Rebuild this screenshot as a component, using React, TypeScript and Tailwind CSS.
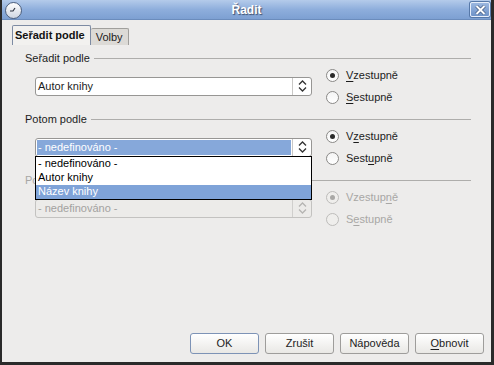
import * as React from 'react';

// Radio button with optional underlined accelerator letter
function Radio({
  label,
  ul,
  checked = false,
  disabled = false,
}: {
  label: string;
  ul: number;
  checked?: boolean;
  disabled?: boolean;
}) {
  const before = label.slice(0, ul);
  const mid = label.slice(ul, ul + 1);
  const after = label.slice(ul + 1);
  return (
    <div className="flex items-center h-[14px]">
      <div
        className={`w-[13px] h-[13px] rounded-full border flex items-center justify-center ${
          disabled
            ? 'border-[#bdbcba] bg-[#efeeec]'
            : 'border-[#8a8987] bg-gradient-to-b from-[#f4f4f4] to-white'
        }`}
      >
        {checked && (
          <div className={`w-[5px] h-[5px] rounded-full ${disabled ? 'bg-[#a9a8a6]' : 'bg-[#2a2a2a]'}`} />
        )}
      </div>
      <span className={`ml-[7px] leading-[14px] ${disabled ? 'text-[#a8a7a5]' : 'text-[#1c1c1c]'}`}>
        {before}
        <span className="underline underline-offset-[2px]">{mid}</span>
        {after}
      </span>
    </div>
  );
}

function SpinArrows({ disabled = false }: { disabled?: boolean }) {
  const c = disabled ? '#b5b4b2' : '#333333';
  return (
    <svg width="9" height="14" viewBox="0 0 9 14">
      <path d="M1 5.5 L4.5 2 L8 5.5" fill="none" stroke={c} strokeWidth="1.3" />
      <path d="M1 8.5 L4.5 12 L8 8.5" fill="none" stroke={c} strokeWidth="1.3" />
    </svg>
  );
}

function Combo({
  value,
  selected = false,
  disabled = false,
  children,
}: {
  value: string;
  selected?: boolean;
  disabled?: boolean;
  children?: React.ReactNode;
}) {
  return (
    <div
      className={`relative ml-[10px] w-[277px] h-[19px] rounded-[3px] border flex ${
        disabled ? 'border-[#c3c2c0] bg-[#ecebe9]' : 'border-[#979694] bg-white'
      }`}
    >
      <div className="flex-1 flex items-center p-[1px]">
        <div
          className={`h-full w-full flex items-center pl-[1px] leading-none ${
            selected ? 'bg-[#86a8da] text-white' : disabled ? 'text-[#a3a2a0]' : 'text-[#1c1c1c]'
          }`}
        >
          {value}
        </div>
      </div>
      <div
        className={`w-[19px] flex items-center justify-center border-l ${
          disabled ? 'border-[#d0cfcd]' : 'border-[#c9c8c6]'
        }`}
      >
        <SpinArrows disabled={disabled} />
      </div>
      {children}
    </div>
  );
}

function SectionLabel({ text, disabled = false }: { text: string; disabled?: boolean }) {
  return (
    <div className="flex items-center h-[14px]">
      <span className={`leading-[14px] ${disabled ? 'text-[#a8a7a5]' : 'text-[#1c1c1c]'}`}>{text}</span>
      <div className="flex-1 ml-[4px] border-t border-[#aeadab] border-b-white h-0" />
    </div>
  );
}

function Section({
  label,
  value,
  up,
  down,
  selected,
  disabled,
  dropdown,
}: {
  label: string;
  value: string;
  up: number;
  down: number;
  selected?: boolean;
  disabled?: boolean;
  dropdown?: React.ReactNode;
}) {
  return (
    <div className="flex flex-col">
      <SectionLabel text={label} disabled={disabled} />
      <div className="flex items-center mt-[3px] h-[36px]">
        <Combo value={value} selected={selected} disabled={disabled}>
          {dropdown}
        </Combo>
        <div className="flex flex-col gap-[8px] ml-[14px]">
          <Radio label="Vzestupně" ul={up} checked disabled={disabled} />
          <Radio label="Sestupně" ul={down} disabled={disabled} />
        </div>
      </div>
    </div>
  );
}

function DropdownList() {
  const items = ['- nedefinováno -', 'Autor knihy', 'Název knihy'];
  return (
    <div className="absolute z-20 left-[-1px] top-[17px] w-[277px] bg-white border border-black flex flex-col">
      {items.map((item, i) => (
        <div
          key={item}
          className={`h-[14px] flex items-center pl-[2px] leading-none ${
            i === 2 ? 'bg-[#7fa3d8] text-white' : 'text-black'
          }`}
        >
          {item}
        </div>
      ))}
    </div>
  );
}

function DialogButton({ children, isDefault = false }: { children: React.ReactNode; isDefault?: boolean }) {
  return (
    <button
      className={`w-[69px] h-[21px] rounded-[3px] border bg-gradient-to-b from-white to-[#e9e8e5] text-[#1c1c1c] leading-none ${
        isDefault ? 'border-[#7d93b6]' : 'border-[#9e9d9b]'
      }`}
    >
      {children}
    </button>
  );
}

export default function App() {
  return (
    <div className="w-[494px] h-[365px] box-border border-l-2 border-r-[3px] border-b-[3px] border-[#2a2a2a] bg-[#edeceb] flex flex-col font-['Liberation_Sans',Arial,sans-serif] text-[11px]">
      {/* title bar */}
      <div className="h-[20px] relative flex items-center justify-center bg-gradient-to-b from-[#b4cbea] via-[#8eaedc] to-[#7da0d2] border-b border-[#6b8cbc]">
        <div className="absolute left-[3px] top-[2px] w-[17px] h-[17px] rounded-full border border-[#4d5f7c] bg-gradient-to-b from-white to-[#cfd6e2] flex items-center justify-center">
          <svg width="11" height="11" viewBox="0 0 11 11">
            <path d="M2 6 L5 6 L7 3" fill="none" stroke="#2d3340" strokeWidth="1.2" />
          </svg>
        </div>
        <span className="text-white font-bold text-[12px] [text-shadow:1px_1px_1px_#3c4f6e]">Řadit</span>
        <div className="absolute right-[1px] top-[2px] w-[20px] h-[15px] rounded-[2px] border border-[#e6eefa] bg-gradient-to-b from-[#9bb7e0] to-[#6f93c8] flex items-center justify-center shadow-[0_0_0_1px_#5678a8]">
          <svg width="11" height="10" viewBox="0 0 11 10">
            <path d="M1.5 1 L9.5 9 M9.5 1 L1.5 9" stroke="#3c557d" strokeWidth="3.4" />
            <path d="M1.5 1 L9.5 9 M9.5 1 L1.5 9" stroke="white" strokeWidth="2" />
          </svg>
        </div>
      </div>

      {/* tabs */}
      <div className="flex items-end pl-[10px] mt-[5px] h-[20px]">
        <div className="h-[20px] px-[2px] pr-[5px] flex items-center bg-[#f2f1ef] border border-b-0 border-[#7d8ba3] rounded-t-[2px] font-bold text-[#111]">
          Seřadit podle
        </div>
        <div className="h-[17px] px-[5px] flex items-center bg-[#dcdad6] border border-l-0 border-b-0 border-[#a09f9c] rounded-t-[2px] text-[#1c1c1c]">
          Volby
        </div>
      </div>

      {/* sort sections */}
      <div className="flex flex-col gap-[8px] pl-[23px] pr-[20px] pt-[6px]">
        <Section label="Seřadit podle" value="Autor knihy" up={0} down={0} />
        <Section
          label="Potom podle"
          value="- nedefinováno -"
          up={1}
          down={4}
          selected
          dropdown={<DropdownList />}
        />
        <Section label="Potom podle" value="- nedefinováno -" up={7} down={1} disabled />
      </div>

      {/* buttons */}
      <div className="mt-auto flex justify-end gap-[6px] pr-[7px] pb-[8px]">
        <DialogButton isDefault>OK</DialogButton>
        <DialogButton>Zrušit</DialogButton>
        <DialogButton>Nápověda</DialogButton>
        <DialogButton>
          <span className="underline underline-offset-[2px]">O</span>bnovit
        </DialogButton>
      </div>
    </div>
  );
}
